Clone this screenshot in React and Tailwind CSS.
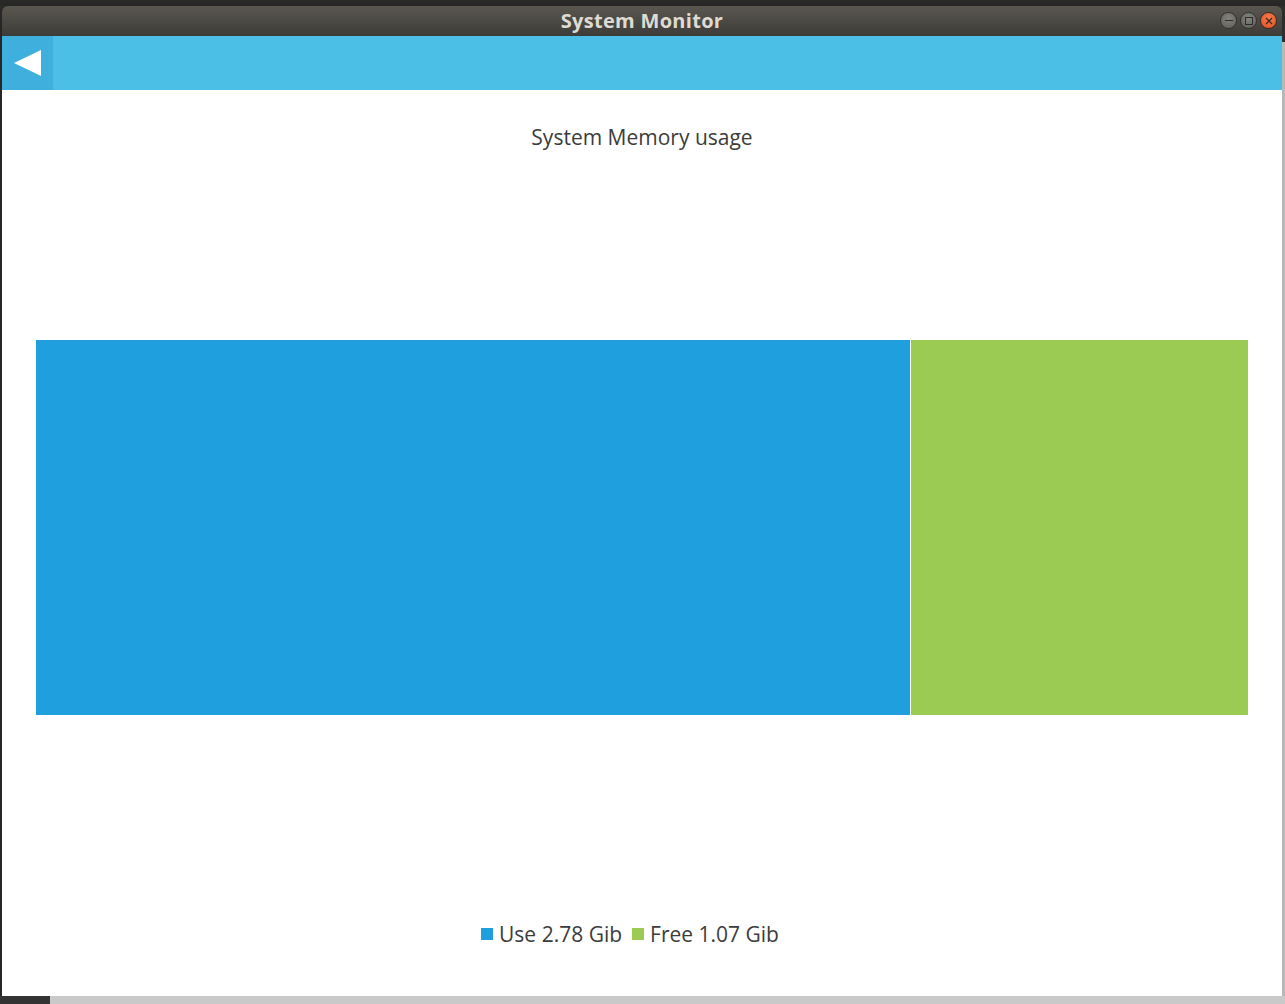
const memory = [
  { label: 'Use', value: 2.78, bar: 'bg-[#209fdf]', grow: 'flex-[2.78]' },
  { label: 'Free', value: 1.07, bar: 'bg-[#9bcb53]', grow: 'flex-[1.07]' },
]

function WindowButton({ kind }) {
  if (kind === 'close') {
    return (
      <span className="flex h-[17px] w-[17px] items-center justify-center rounded-full border border-[#3a2a24] bg-[radial-gradient(circle_at_50%_35%,#f47a4d,#e2501f)]">
        <svg width="8" height="8" viewBox="0 0 8 8">
          <path d="M1 1 L7 7 M7 1 L1 7" stroke="#3b2a22" strokeWidth="1.3" />
        </svg>
      </span>
    )
  }
  return (
    <span className="flex h-[17px] w-[17px] items-center justify-center rounded-full border border-[#33322f] bg-[radial-gradient(circle_at_50%_35%,#85837d,#5e5c57)]">
      {kind === 'min' ? (
        <span className="h-px w-[8px] bg-[#2d2c29]" />
      ) : (
        <span className="h-[8px] w-[8px] border border-[#2d2c29]" />
      )}
    </span>
  )
}

function TitleBar() {
  return (
    <div className="relative flex h-[30px] items-center justify-center rounded-t-[6px] bg-gradient-to-b from-[#5a5750] to-[#3d3c38]">
      <span className="text-[20px] font-bold tracking-[0.3px] text-[#dfdbd2] font-['Open_Sans',sans-serif]">System Monitor</span>
      <div className="absolute right-[5px] top-[6px] flex gap-[3px]">
        <WindowButton kind="min" />
        <WindowButton kind="max" />
        <WindowButton kind="close" />
      </div>
    </div>
  )
}

function Header() {
  return (
    <div className="flex h-[54px] bg-[#4cbfe6]">
      <button className="flex w-[51px] items-center justify-center bg-[#3fb0dd]">
        <svg width="27" height="26" viewBox="0 0 27 26">
          <polygon points="0,13 27,0 27,26" fill="#ffffff" />
        </svg>
      </button>
    </div>
  )
}

function MemoryChart() {
  return (
    <div className="flex flex-1 flex-col items-center bg-white pt-[33px] font-['Open_Sans',sans-serif] text-[#3c3c3c]">
      <h1 className="text-[21px] leading-[28px]">System Memory usage</h1>
      <div className="mt-[189px] flex h-[375px] w-full gap-px px-[34px]">
        {memory.map((m) => (
          <div key={m.label} className={`${m.grow} ${m.bar}`} />
        ))}
      </div>
      {/* legend sits a little left of centre in the original */}
      <div className="mt-[205px] mr-[24px] flex items-center gap-[10px] text-[21px] leading-[28px]">
        {memory.map((m) => (
          <div key={m.label} className="flex items-center gap-[6px]">
            <span className={`h-[12px] w-[12px] ${m.bar}`} />
            <span>
              {m.label} {m.value.toFixed(2)} Gib
            </span>
          </div>
        ))}
      </div>
    </div>
  )
}

export default function App() {
  return (
    <div className="flex h-[1004px] w-[1285px] flex-col overflow-hidden bg-[#2c2c2c]">
      <div className="h-[6px] bg-[#2a2a28]" />
      <div className="flex h-[990px]">
        <div className="w-[2px] bg-[#2e2e2e]" />
        <div className="flex w-[1280px] flex-col shadow-[0_2px_6px_rgba(0,0,0,0.4)]">
          <TitleBar />
          <Header />
          <MemoryChart />
        </div>
        <div className="flex w-[3px] flex-col">
          <div className="h-[36px] bg-[#2e2e2e]" />
          <div className="flex-1 bg-[#b8b8b8]" />
        </div>
      </div>
      <div className="flex h-[8px]">
        <div className="w-[50px] bg-[#333333]" />
        <div className="flex-1 bg-[#c9c9c9]" />
      </div>
    </div>
  )
}
